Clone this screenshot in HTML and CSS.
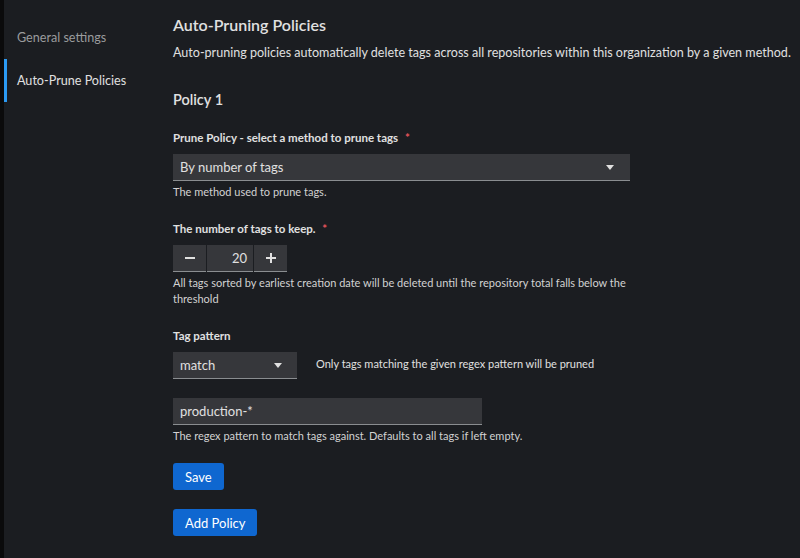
FILE: index.html
```html
<!DOCTYPE html>
<html lang="en">
<head>
<meta charset="utf-8">
<title>Auto-Pruning Policies</title>
<link rel="stylesheet" href="styles.css">
</head>
<body>
<div class="page">
  <nav class="sidebar">
    <div class="nav-item">General settings</div>
    <div class="nav-item active">Auto-Prune Policies</div>
  </nav>
  <main class="main">
    <h1 class="title">Auto-Pruning Policies</h1>
    <p class="desc">Auto-pruning policies automatically delete tags across all repositories within this organization by a given method.</p>
    <h2 class="policy-title">Policy 1</h2>
    <form class="form">
      <div class="group">
        <div class="label">Prune Policy - select a method to prune tags <span class="req">*</span></div>
        <div class="select wide">
          <span>By number of tags</span>
          <svg class="caret" width="8" height="5" viewBox="0 0 8 5"><path d="M0 0h8L4 5z" fill="#e0e0e0"/></svg>
        </div>
        <div class="helper">The method used to prune tags.</div>
      </div>
      <div class="group">
        <div class="label">The number of tags to keep. <span class="req">*</span></div>
        <div class="number">
          <div class="num-btn">
            <svg width="10" height="10" viewBox="0 0 10 10"><path d="M0 5h10" stroke="#e0e0e0" stroke-width="2"/></svg>
          </div>
          <div class="num-val">20</div>
          <div class="num-btn">
            <svg width="10" height="10" viewBox="0 0 10 10"><path d="M0 5h10M5 0v10" stroke="#e0e0e0" stroke-width="2"/></svg>
          </div>
        </div>
        <div class="helper">All tags sorted by earliest creation date will be deleted until the repository total falls below the threshold</div>
      </div>
      <div class="group pattern">
        <div class="label">Tag pattern</div>
        <div class="row">
          <div class="select small">
            <span>match</span>
            <svg class="caret" width="8" height="5" viewBox="0 0 8 5"><path d="M0 0h8L4 5z" fill="#e0e0e0"/></svg>
          </div>
          <div class="side-text">Only tags matching the given regex pattern will be pruned</div>
        </div>
      </div>
      <div class="group tight">
        <div class="input">production-*</div>
        <div class="helper">The regex pattern to match tags against. Defaults to all tags if left empty.</div>
      </div>
      <div class="btn-row"><button type="button" class="btn">Save</button></div>
      <div class="btn-row"><button type="button" class="btn">Add Policy</button></div>
    </form>
  </main>
</div>
</body>
</html>
```
FILE: styles.css
```css
html, body {
  margin: 0;
  padding: 0;
  background: #1b1d21;
  height: 100%;
}
body {
  font-family: Lato, "Liberation Sans", sans-serif;
  color: #e0e0e0;
}
.page {
  display: flex;
  min-height: 558px;
  border-left: 4px solid #0a0a0b;
}
.sidebar {
  width: 169px;
  flex: none;
  padding-top: 16px;
}
.nav-item {
  height: 43px;
  display: flex;
  align-items: center;
  padding-left: 10px;
  font-size: 12.6px;
  color: #9a9b9d;
  border-left: 3px solid transparent;
}
.nav-item.active {
  color: #e0e0e0;
  border-left-color: #2b9af3;
}
.main {
  flex: 1;
  padding-top: 14px;
}
.title {
  margin: 0;
  font-size: 16px;
  font-weight: 600;
  line-height: 22px;
}
.desc {
  margin: 7px 0 0;
  font-size: 12.55px;
  line-height: 20px;
  white-space: nowrap;
}
.policy-title {
  margin: 27px 0 0;
  font-size: 14.5px;
  font-weight: 600;
  line-height: 20px;
}
.form {
  width: 456px;
  margin-top: 20px;
}
.group {
  margin-bottom: 21px;
}
.group.pattern {
  margin-bottom: 19px;
}
.group.tight {
  margin-bottom: 19px;
}
.label {
  font-size: 11.5px;
  font-weight: 700;
  line-height: 16px;
  margin-bottom: 8px;
}
.req {
  color: #e5535b;
  margin-left: 4px;
}
.select {
  height: 27px;
  box-sizing: border-box;
  background: #36373b;
  border-bottom: 1px solid #8a8d90;
  display: flex;
  align-items: center;
  justify-content: space-between;
  padding: 0 16px 0 7px;
  font-size: 13px;
}
.select.wide { width: 457px; }
.select.small { width: 124px; padding-right: 15px; }
.helper {
  font-size: 11px;
  line-height: 16px;
  margin-top: 3px;
  color: #d2d2d2;
}
.number {
  display: flex;
  gap: 1px;
  width: 114px;
  height: 27px;
}
.num-btn, .num-val {
  background: #36373b;
  border-bottom: 1px solid #8a8d90;
  box-sizing: border-box;
  display: flex;
  align-items: center;
  justify-content: center;
}
.num-btn { width: 33px; }
.num-val {
  width: 46px;
  justify-content: flex-end;
  padding-right: 6px;
  font-size: 13px;
}
.row {
  display: flex;
  align-items: center;
  gap: 19px;
}
.side-text {
  font-size: 11px;
  margin-top: -5px;
}
.input {
  width: 309px;
  height: 27px;
  box-sizing: border-box;
  background: #36373b;
  border-bottom: 1px solid #8a8d90;
  display: flex;
  align-items: center;
  padding-left: 7px;
  font-size: 13px;
}
.btn-row { margin-bottom: 19px; }
.btn {
  font-family: inherit;
  font-size: 13px;
  color: #fff;
  background: #0f67d0;
  border: none;
  border-radius: 3px;
  height: 27px;
  padding: 0 12px;
}
```
